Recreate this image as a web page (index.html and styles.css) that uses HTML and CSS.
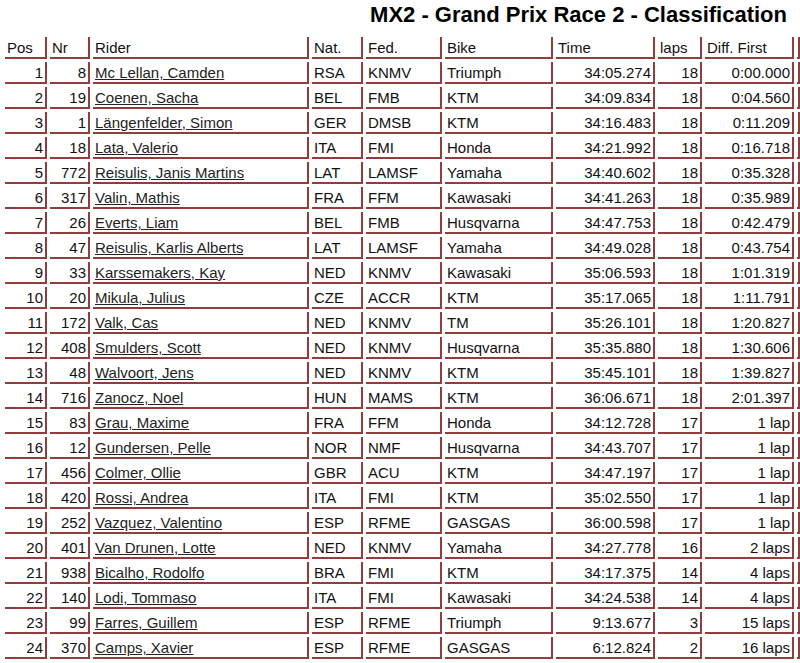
FILE: index.html
```html
<!DOCTYPE html>
<html>
<head>
<meta charset="utf-8">
<link rel="stylesheet" href="styles.css">
</head>
<body>
<div class="title">MX2 - Grand Prix Race 2 - Classification</div>
<table class="results">
<colgroup>
<col class="c-pos"><col class="c-nr"><col class="c-rider"><col class="c-nat"><col class="c-fed"><col class="c-bike"><col class="c-time"><col class="c-laps"><col class="c-diff"><col class="c-end">
</colgroup>
<thead>
<tr><th>Pos</th><th>Nr</th><th>Rider</th><th>Nat.</th><th>Fed.</th><th>Bike</th><th>Time</th><th>laps</th><th>Diff. First</th><th></th></tr>
</thead>
<tbody>
<tr><td class="num">1</td><td class="num">8</td><td><a href="#">Mc Lellan, Camden</a></td><td>RSA</td><td>KNMV</td><td>Triumph</td><td class="num">34:05.274</td><td class="num">18</td><td class="num">0:00.000</td><td></td></tr>
<tr><td class="num">2</td><td class="num">19</td><td><a href="#">Coenen, Sacha</a></td><td>BEL</td><td>FMB</td><td>KTM</td><td class="num">34:09.834</td><td class="num">18</td><td class="num">0:04.560</td><td></td></tr>
<tr><td class="num">3</td><td class="num">1</td><td><a href="#">Längenfelder, Simon</a></td><td>GER</td><td>DMSB</td><td>KTM</td><td class="num">34:16.483</td><td class="num">18</td><td class="num">0:11.209</td><td></td></tr>
<tr><td class="num">4</td><td class="num">18</td><td><a href="#">Lata, Valerio</a></td><td>ITA</td><td>FMI</td><td>Honda</td><td class="num">34:21.992</td><td class="num">18</td><td class="num">0:16.718</td><td></td></tr>
<tr><td class="num">5</td><td class="num">772</td><td><a href="#">Reisulis, Janis Martins</a></td><td>LAT</td><td>LAMSF</td><td>Yamaha</td><td class="num">34:40.602</td><td class="num">18</td><td class="num">0:35.328</td><td></td></tr>
<tr><td class="num">6</td><td class="num">317</td><td><a href="#">Valin, Mathis</a></td><td>FRA</td><td>FFM</td><td>Kawasaki</td><td class="num">34:41.263</td><td class="num">18</td><td class="num">0:35.989</td><td></td></tr>
<tr><td class="num">7</td><td class="num">26</td><td><a href="#">Everts, Liam</a></td><td>BEL</td><td>FMB</td><td>Husqvarna</td><td class="num">34:47.753</td><td class="num">18</td><td class="num">0:42.479</td><td></td></tr>
<tr><td class="num">8</td><td class="num">47</td><td><a href="#">Reisulis, Karlis Alberts</a></td><td>LAT</td><td>LAMSF</td><td>Yamaha</td><td class="num">34:49.028</td><td class="num">18</td><td class="num">0:43.754</td><td></td></tr>
<tr><td class="num">9</td><td class="num">33</td><td><a href="#">Karssemakers, Kay</a></td><td>NED</td><td>KNMV</td><td>Kawasaki</td><td class="num">35:06.593</td><td class="num">18</td><td class="num">1:01.319</td><td></td></tr>
<tr><td class="num">10</td><td class="num">20</td><td><a href="#">Mikula, Julius</a></td><td>CZE</td><td>ACCR</td><td>KTM</td><td class="num">35:17.065</td><td class="num">18</td><td class="num">1:11.791</td><td></td></tr>
<tr><td class="num">11</td><td class="num">172</td><td><a href="#">Valk, Cas</a></td><td>NED</td><td>KNMV</td><td>TM</td><td class="num">35:26.101</td><td class="num">18</td><td class="num">1:20.827</td><td></td></tr>
<tr><td class="num">12</td><td class="num">408</td><td><a href="#">Smulders, Scott</a></td><td>NED</td><td>KNMV</td><td>Husqvarna</td><td class="num">35:35.880</td><td class="num">18</td><td class="num">1:30.606</td><td></td></tr>
<tr><td class="num">13</td><td class="num">48</td><td><a href="#">Walvoort, Jens</a></td><td>NED</td><td>KNMV</td><td>KTM</td><td class="num">35:45.101</td><td class="num">18</td><td class="num">1:39.827</td><td></td></tr>
<tr><td class="num">14</td><td class="num">716</td><td><a href="#">Zanocz, Noel</a></td><td>HUN</td><td>MAMS</td><td>KTM</td><td class="num">36:06.671</td><td class="num">18</td><td class="num">2:01.397</td><td></td></tr>
<tr><td class="num">15</td><td class="num">83</td><td><a href="#">Grau, Maxime</a></td><td>FRA</td><td>FFM</td><td>Honda</td><td class="num">34:12.728</td><td class="num">17</td><td class="num">1 lap</td><td></td></tr>
<tr><td class="num">16</td><td class="num">12</td><td><a href="#">Gundersen, Pelle</a></td><td>NOR</td><td>NMF</td><td>Husqvarna</td><td class="num">34:43.707</td><td class="num">17</td><td class="num">1 lap</td><td></td></tr>
<tr><td class="num">17</td><td class="num">456</td><td><a href="#">Colmer, Ollie</a></td><td>GBR</td><td>ACU</td><td>KTM</td><td class="num">34:47.197</td><td class="num">17</td><td class="num">1 lap</td><td></td></tr>
<tr><td class="num">18</td><td class="num">420</td><td><a href="#">Rossi, Andrea</a></td><td>ITA</td><td>FMI</td><td>KTM</td><td class="num">35:02.550</td><td class="num">17</td><td class="num">1 lap</td><td></td></tr>
<tr><td class="num">19</td><td class="num">252</td><td><a href="#">Vazquez, Valentino</a></td><td>ESP</td><td>RFME</td><td>GASGAS</td><td class="num">36:00.598</td><td class="num">17</td><td class="num">1 lap</td><td></td></tr>
<tr><td class="num">20</td><td class="num">401</td><td><a href="#">Van Drunen, Lotte</a></td><td>NED</td><td>KNMV</td><td>Yamaha</td><td class="num">34:27.778</td><td class="num">16</td><td class="num">2 laps</td><td></td></tr>
<tr><td class="num">21</td><td class="num">938</td><td><a href="#">Bicalho, Rodolfo</a></td><td>BRA</td><td>FMI</td><td>KTM</td><td class="num">34:17.375</td><td class="num">14</td><td class="num">4 laps</td><td></td></tr>
<tr><td class="num">22</td><td class="num">140</td><td><a href="#">Lodi, Tommaso</a></td><td>ITA</td><td>FMI</td><td>Kawasaki</td><td class="num">34:24.538</td><td class="num">14</td><td class="num">4 laps</td><td></td></tr>
<tr><td class="num">23</td><td class="num">99</td><td><a href="#">Farres, Guillem</a></td><td>ESP</td><td>RFME</td><td>Triumph</td><td class="num">9:13.677</td><td class="num">3</td><td class="num">15 laps</td><td></td></tr>
<tr><td class="num">24</td><td class="num">370</td><td><a href="#">Camps, Xavier</a></td><td>ESP</td><td>RFME</td><td>GASGAS</td><td class="num">6:12.824</td><td class="num">2</td><td class="num">16 laps</td><td></td></tr>
</tbody>
</table>
</body>
</html>
```
FILE: styles.css
```css
html, body {
  margin: 0;
  padding: 0;
  background: #ffffff;
  overflow: hidden;
  width: 800px;
  height: 663px;
}
body {
  font-family: "Liberation Sans", Arial, sans-serif;
  color: #111111;
}
.title {
  font-weight: bold;
  font-size: 22px;
  line-height: 26px;
  text-align: right;
  padding-right: 13px;
  margin-top: 2px;
  margin-bottom: 6px;
  color: #000000;
  white-space: nowrap;
}
.results {
  margin-left: 2px;
  border-collapse: separate;
  border-spacing: 3px;
  table-layout: fixed;
  width: 801px;
  font-size: 15px;
}
.c-pos { width: 42px; }
.c-nr { width: 40px; }
.c-rider { width: 216px; }
.c-nat { width: 51px; }
.c-fed { width: 76px; }
.c-bike { width: 108px; }
.c-time { width: 99px; }
.c-laps { width: 44px; }
.c-diff { width: 89px; }
.c-end { width: 3px; }
.results th,
.results td {
  box-sizing: border-box;
  height: 22px;
  padding: 1px 2px 0 2px;
  line-height: 19px;
  text-align: left;
  font-weight: normal;
  white-space: nowrap;
  overflow: hidden;
  border-right: 2px solid #923c3c;
  border-bottom: 2px solid #923c3c;
  vertical-align: middle;
}
.results th:last-child,
.results td:last-child {
  padding: 0;
}
.results td.num {
  text-align: right;
}
.results a {
  color: #222222;
  text-decoration: underline;
}
```
